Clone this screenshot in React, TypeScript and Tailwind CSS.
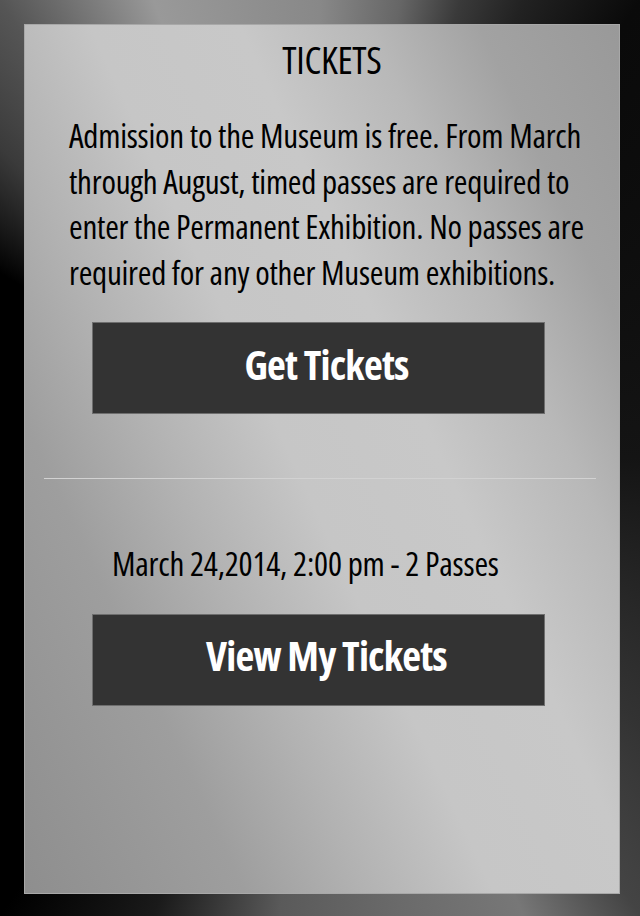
const outerBg =
  "bg-[conic-gradient(from_0deg_at_50%_50%,#888_0deg,#666_10deg,#3a3a3a_17deg,#222_24deg,#0a0a0a_35deg,#141414_90deg,#333_130deg,#444_145deg,#777_156deg,#6a6a6a_170deg,#5a5a5a_185deg,#1a1a1a_200deg,#000_215deg,#000_300deg,#3a3a3a_314deg,#555_325deg,#999_340deg,#888_360deg)]";

const panelBg =
  "bg-[linear-gradient(65deg,#8e8e8e_0%,#9e9e9e_22%,#b2b2b2_34%,#c6c6c6_47%,#c8c8c8_62%,#b8b8b8_75%,#a2a2a2_86%,#999_100%)]";

function DarkButton({ label }: { label: string }) {
  return (
    <button className="ml-[67px] flex h-[92px] w-[453px] items-center justify-center border border-[#6e6e6e] bg-[#333] pb-[8px] pl-[16px] text-[41px] leading-none font-bold tracking-[-0.8px] text-white">
      {label}
    </button>
  );
}

export default function App() {
  return (
    <div
      className={`flex min-h-[916px] w-full pt-[24px] pr-[20px] pb-[22px] pl-[24px] font-['Open_Sans',sans-serif] [font-stretch:75%] ${outerBg}`}
    >
      <div className={`flex w-full flex-col border border-[#a8a8a8] pt-[15px] text-black ${panelBg}`}>
        <h1 className="pl-[20px] text-center text-[38px] leading-[38px] font-normal tracking-[-0.3px]">TICKETS</h1>

        <p className="mt-[35px] ml-[44px] w-[535px] text-[33px] leading-[45.5px] tracking-[-0.25px]">
          Admission to the Museum is free. From March through August, timed passes are required to enter the
          Permanent Exhibition. No passes are required for any other Museum exhibitions.
        </p>

        <div className="mt-[27px]">
          <DarkButton label="Get Tickets" />
        </div>

        <div className="mt-[64px] ml-[19px] h-px w-[552px] bg-[#d2d2d2]" />

        <p className="mt-[62px] ml-[87px] text-[33px] leading-[45.5px] tracking-[-0.2px]">
          March 24,2014, 2:00 pm - 2 Passes
        </p>

        <div className="mt-[27px]">
          <DarkButton label="View My Tickets" />
        </div>
      </div>
    </div>
  );
}
